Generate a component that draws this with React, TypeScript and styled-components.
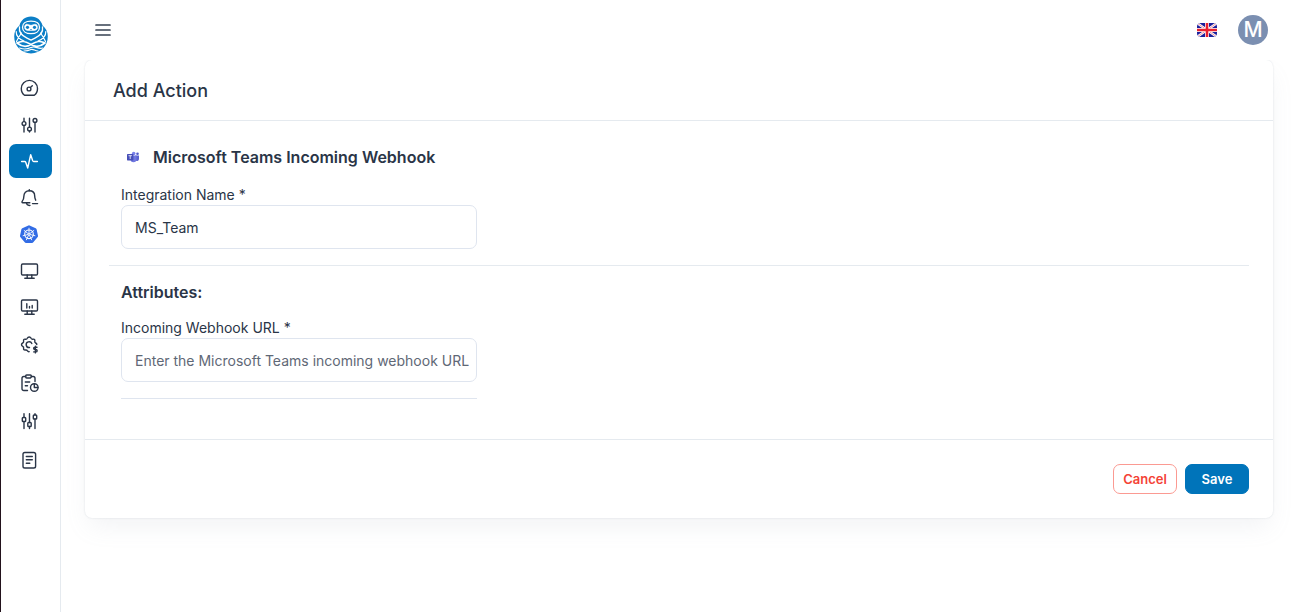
import React, { useState } from "react";
import styled, { createGlobalStyle } from "styled-components";

const ink = "#2a3547";
const blue = "#0074ba";
const line = "#e5eaef";

const GlobalStyle = createGlobalStyle`
  *, *::before, *::after { box-sizing: border-box; }
  body {
    margin: 0;
    background: #fff;
    color: ${ink};
    font-family: Inter, "Liberation Sans", sans-serif;
    font-size: 14px;
  }
  h1, h2, h3 { margin: 0; }
`;

const Shell = styled.div`
  display: flex;
  min-height: 100vh;
  border-left: 1px solid #22121c;
`;

const Sidebar = styled.aside`
  flex: none;
  width: 60px;
  padding: 16px 8px 0;
  border-right: 1px solid ${line};
`;

const Brand = styled.a`
  display: flex;
  justify-content: center;
  height: 38px;
  margin-bottom: 17px;
`;

const NavGroup = styled.nav<{ $height: number }>`
  display: flex;
  flex-direction: column;
  justify-content: space-between;
  height: ${(p) => p.$height}px;
  margin-bottom: 3px;
`;

const NavItem = styled.a<{ $active?: boolean }>`
  display: flex;
  align-items: center;
  height: 34px;
  padding-left: 10px;
  border-radius: 7px;
  color: ${(p) => (p.$active ? "#fff" : ink)};
  background: ${(p) => (p.$active ? blue : "transparent")};
`;

const Main = styled.main`
  flex: 1;
  min-width: 0;
  padding: 0 23px 24px 24px;
`;

const TopBar = styled.header`
  position: relative;
  z-index: 1;
  display: flex;
  align-items: center;
  height: 60px;
  padding: 0 5px 0 8px;
  background: #fff;
`;

const PlainButton = styled.button`
  display: flex;
  padding: 0;
  border: 0;
  background: none;
  cursor: pointer;
`;

const TopActions = styled.div`
  display: flex;
  align-items: center;
  gap: 21px;
  margin-left: auto;
`;

const Avatar = styled.button`
  width: 30px;
  height: 30px;
  padding: 0;
  border: 0;
  border-radius: 50%;
  background: #7b8fb1;
  color: #fff;
  font: 500 21px/30px Inter, sans-serif;
`;

const Card = styled.form`
  border-radius: 7px;
  background: #fff;
  box-shadow: 0 0 2px rgba(145, 158, 171, 0.3), 0 12px 24px -4px rgba(145, 158, 171, 0.12);
`;

const CardHeader = styled.div`
  padding: 19px 28px 17px;
  border-bottom: 1px solid ${line};
`;

const PageTitle = styled.h1`
  font-size: 18px;
  font-weight: 500;
  line-height: 24px;
`;

const CardBody = styled.div`
  padding: 24px 24px 40px;
`;

const Section = styled.section`
  padding: 0 12px 16px;
  & + & {
    padding-top: 16px;
    padding-bottom: 0;
    border-top: 1px solid ${line};
  }
`;

const IntegrationTitle = styled.h2`
  display: flex;
  align-items: center;
  gap: 8px;
  margin-bottom: 16px;
  font-size: 16px;
  font-weight: 600;
  line-height: 24px;
`;

const SectionTitle = styled.h3`
  margin-bottom: 16px;
  font-size: 16px;
  font-weight: 600;
  line-height: 20px;
`;

const Field = styled.div`
  width: 356px;
  max-width: 100%;
`;

const Label = styled.label`
  display: block;
  line-height: 20px;
`;

const Input = styled.input`
  display: block;
  width: 100%;
  height: 44px;
  padding: 0 4px 0 13px;
  border: 1px solid #dfe5ef;
  border-radius: 7px;
  background: #fff;
  color: ${ink};
  font: inherit;
  outline: none;
  &::placeholder { color: #5f6876; opacity: 1; }
  &:focus { border-color: ${blue}; }
`;

const Rule = styled.hr`
  margin: 16px 0 0;
  border: 0;
  border-top: 1px solid #dfe5ef;
`;

const CardFooter = styled.div`
  display: flex;
  justify-content: flex-end;
  gap: 8px;
  padding: 24px;
  border-top: 1px solid ${line};
`;

const Button = styled.button<{ $primary?: boolean }>`
  width: 64px;
  height: 30px;
  padding: 0;
  border: 1px solid ${(p) => (p.$primary ? blue : "#fb9a92")};
  border-radius: 7px;
  background: ${(p) => (p.$primary ? blue : "#fff")};
  color: ${(p) => (p.$primary ? "#fff" : "#f44336")};
  font: 600 13px Inter, sans-serif;
  cursor: pointer;
`;

const Icon = ({ children }: { children: React.ReactNode }) => (
  <svg width="20" height="20" viewBox="0 0 20 20" fill="none" stroke="currentColor" strokeWidth="1.4" strokeLinecap="round" strokeLinejoin="round" aria-hidden="true">
    {children}
  </svg>
);

const Logo = () => (
  <svg width="34" height="38" viewBox="0 0 34 38" fill="none" aria-hidden="true">
    <path d="M17 .6C23 .6 27.300 4.500 28.500 9.500C32 12 33.800 16 33.800 20.500C33.800 30 26.500 37.400 17 37.400S.2 30 .2 20.500C.2 16 2 12 5.500 9.500C6.700 4.500 11 .6 17 .6Z" fill="#0c7fc7" />
    <g stroke="#fff" strokeLinecap="round" strokeLinejoin="round">
      <path d="M17 5.200C11.500 5.200 8.500 7.700 8.500 11.200C8.500 15.200 12 17.700 17 17.700S25.500 15.200 25.500 11.200C25.500 7.700 22.500 5.200 17 5.200Z" strokeWidth="1.300" />
      <path d="M12.800 8.300C15 8.300 15.500 9.300 17 9.300S19 8.300 21.200 8.300C23 8.300 23.500 9.800 23.500 11.200C23.500 13.300 22 14.500 20 14.500H14C12 14.500 10.500 13.300 10.500 11.200C10.500 9.800 11 8.300 12.800 8.300Z" fill="#fff" strokeWidth=".5" />
      <path d="M5.500 11C4.500 17 8.500 20 13 22.200L17 24.200L21 22.200C25.500 20 29.500 17 28.500 11" strokeWidth="1.300" />
      <path d="M2.200 15.500C2 20.500 6 23.500 10 25M31.800 15.500C32 20.500 28 23.500 24 25M7.500 17C5 20.500 3.500 23 2.500 25.500M26.500 17C29 20.500 30.500 23 31.500 25.500" strokeWidth="1.200" />
      <path d="M3 27C8 24 12 25.500 17 28.500S26 31 31 27M3 27C8 31 12 31.500 17 28.500S26 24 31 27" strokeWidth="1.700" />
      <path d="M5.500 32C9.500 33.500 13 33.500 17 31.500S24.500 33.500 28.500 32M10 35C13 35 15 34.500 17 33.500S21 35 24 35" strokeWidth="1.200" />
    </g>
    <circle cx="13.500" cy="11.300" r="1.600" fill="#0c7fc7" />
    <circle cx="20.500" cy="11.300" r="1.600" fill="#0c7fc7" />
    <path d="M16 13h2l-1 1.200Z" fill="#0c7fc7" />
  </svg>
);

const gauge = (
  <Icon>
    <path d="M5.500 17.200C3.500 15.700 2.300 13.200 2.300 10.400C2.300 5.900 6 2.400 10.400 2.400S18.500 5.900 18.500 10.400C18.500 13.200 17.300 15.700 15.300 17.200Z" />
    <circle cx="10" cy="11" r="1.900" />
    <path d="M11.400 9.600L13.300 7.700" />
  </Icon>
);
const sliders = (
  <Icon>
    <path d="M5 3.200V6.500M5 10.500V17M10.500 3.200V12M10.500 16V17M16 7.500V17" />
    <circle cx="5" cy="8.500" r="1.900" />
    <circle cx="10.500" cy="14" r="1.900" />
    <circle cx="16" cy="5.400" r="1.900" />
  </Icon>
);
const squareSliders = (
  <Icon>
    <path d="M5 2.800V6.500M5 10.500V17.500M10.500 2.800V11.500M10.500 15.500V17.500M16 2.800V4M16 8V17.500" />
    <rect x="3.300" y="6.500" width="3.400" height="4" rx=".8" />
    <rect x="8.800" y="11.500" width="3.400" height="4" rx=".8" />
    <rect x="14.300" y="4" width="3.400" height="4" rx=".8" />
  </Icon>
);
const pulse = (
  <Icon>
    <path d="M2.600 10.500H5.700C6.200 10.500 6.500 10.800 6.700 11.300L8.700 17L11.700 3.700L13.700 9.800C13.900 10.300 14.200 10.500 14.700 10.500H18.400" />
  </Icon>
);
const bell = (
  <Icon>
    <path d="M10.800 14.800H3.700C3 14.800 2.700 14 3.200 13.400C4.600 11.700 4.900 10.500 4.900 8C4.900 5 7 2.800 10.300 2.800S15.700 5 15.700 8C15.700 10 16 11 16.700 12.200" />
    <path d="M10.300 1.600V2.800M7.500 15C7.700 16.700 9 17.600 11 17.400M13.500 15.600H18.600" />
  </Icon>
);
const kubernetes = (
  <svg width="20" height="20" viewBox="0 0 20 20" fill="none" aria-hidden="true">
    <path d="M10 1.200L16.700 4.200Q17.400 4.500 17.600 5.200L19 11.700Q19.100 12.400 18.700 13L14.300 18.300Q13.800 18.900 13 18.900H7Q6.200 18.900 5.700 18.300L1.300 13Q.9 12.400 1 11.700L2.400 5.200Q2.600 4.500 3.300 4.200Z" fill="#326ce5" />
    <g stroke="#fff" strokeLinecap="round">
      <circle cx="10" cy="10.300" r="4.300" strokeWidth="1.100" />
      <path d="M10 4.200V9M14.800 6.500L11 9.500M15.900 11.700L11.200 10.600M12.600 15.800L10.600 11.500M7.400 15.800L9.400 11.500M4.100 11.700L8.800 10.600M5.200 6.500L9 9.500" strokeWidth=".9" />
    </g>
    <circle cx="10" cy="10.300" r="1.300" fill="#fff" />
    <circle cx="10" cy="10.300" r=".5" fill="#326ce5" />
  </svg>
);
const monitor = (
  <Icon>
    <rect x="2.500" y="3" width="16" height="11" rx="1.200" />
    <path d="M8.200 14V17.300M12.800 14V17.300M5.800 17.300H15.200" />
  </Icon>
);
const monitorChart = (
  <Icon>
    <rect x="2.500" y="3" width="16" height="11" rx="1.200" />
    <path d="M8.200 14V17.300M12.800 14V17.300M5.800 17.300H15.200M7.800 6.700V11M10.500 9.500V11M13.200 8.500V11" />
  </Icon>
);
const gearDollar = (
  <Icon>
    <path d="M10.200 17.700C9.200 18 8.800 17.500 8.300 16.700C7.900 16 7.200 15.800 6.400 16C5.200 16.300 4.400 15.600 4.600 14.400C4.800 13.500 4.500 12.800 3.700 12.400C2.100 11.600 2.100 9.800 3.700 9C4.500 8.600 4.800 7.900 4.600 7C4.300 5.600 5 4.900 6.400 5.200C7.300 5.400 7.900 5.100 8.300 4.300C9.100 2.500 11.300 2.500 12.100 4.300C12.500 5.100 13.100 5.400 14 5.200C15.400 4.900 16.100 5.600 15.800 7C15.600 7.900 15.900 8.600 16.700 9C17.500 9.400 17.900 9.900 17.800 10.500" />
    <path d="M12.800 9.600A2.900 2.900 0 1 0 10.500 13.500" />
    <path d="M18 13.200H16C14.200 13.200 14.200 15.500 16 15.500H16.800C18.600 15.500 18.600 17.900 16.800 17.900H14.700M16.400 12.200V18.900" />
  </Icon>
);
const clipboardClock = (
  <Icon>
    <path d="M8.500 17.500H4.800C3.700 17.500 3 16.800 3 15.700V5.300C3 4.200 3.700 3.500 4.800 3.500H6.700M12.300 3.500H14.200C15.300 3.500 16 4.200 16 5.300V8.500" />
    <path d="M7.700 2H11.300Q12.400 2 12.400 3.300T11.300 5H7.700Q6.600 5 6.600 3.500T7.700 2ZM6.300 9H10.700M6.300 12.700H8.500" />
    <circle cx="15.300" cy="14.500" r="3.800" />
    <path d="M15.300 11V14.500H18.800" />
  </Icon>
);
const notes = (
  <Icon>
    <rect x="4" y="2.500" width="12.600" height="15.500" rx="1.800" />
    <path d="M7.300 6.500H13.300M7.300 9.800H13.300M7.300 13.200H10.800" />
  </Icon>
);

const Menu = () => (
  <svg width="20" height="20" viewBox="0 0 20 20" stroke="#364152" strokeWidth="1.700" strokeLinecap="round" aria-hidden="true">
    <path d="M3 5H17M3 10H17M3 15H17" />
  </svg>
);

const Flag = () => (
  <svg width="20" height="14" viewBox="0 0 20 14" aria-hidden="true">
    <clipPath id="flag-edge"><rect width="20" height="14" rx="4" /></clipPath>
    <g clipPath="url(#flag-edge)">
      <path fill="#1a1f9c" d="M0 0h20v14H0z" />
      <path d="M0 0L20 14M20 0L0 14" stroke="#fff" strokeWidth="2.400" />
      <path d="M0 0L20 14M20 0L0 14" stroke="#e8313e" strokeWidth=".5" />
      <path d="M10 0V14M0 7H20" stroke="#fff" strokeWidth="4" />
      <path d="M10 0V14M0 7H20" stroke="#e8202f" strokeWidth="2.600" />
    </g>
  </svg>
);

const Teams = () => (
  <svg width="24" height="24" viewBox="0 0 24 24" aria-hidden="true">
    <circle cx="16.500" cy="8.700" r="1.300" fill="#5059c9" />
    <path d="M14.300 10.400H18V14A2.100 2.100 0 0 1 14.300 15.300Z" fill="#5b62d0" />
    <circle cx="12.700" cy="8.500" r="1.800" fill="#7b83eb" />
    <path d="M9.500 10.400H15.500V14.200A3 3 0 0 1 9.500 14.200Z" fill="#7078e0" />
    <rect x="6" y="9" width="6.400" height="6.400" rx=".6" fill="#464eb8" />
    <path d="M7.500 10.700H10.900M9.200 10.700V14" stroke="#fff" strokeWidth=".8" />
  </svg>
);

const monitoring = [
  { name: "Dashboard", icon: gauge },
  { name: "Controls", icon: sliders },
  { name: "Activity", icon: pulse, active: true },
  { name: "Alerts", icon: bell },
  { name: "Kubernetes", icon: kubernetes },
  { name: "Hosts", icon: monitor },
  { name: "Metrics", icon: monitorChart },
];

const management = [
  { name: "Cost settings", icon: gearDollar },
  { name: "Reports", icon: clipboardClock },
  { name: "Configuration", icon: squareSliders },
  { name: "Logs", icon: notes },
];

export default function App() {
  const [name, setName] = useState("MS_Team");
  const [url, setUrl] = useState("");

  return (
    <>
      <GlobalStyle />
      <Shell>
        <Sidebar>
          <Brand href="#" aria-label="Home"><Logo /></Brand>
          <NavGroup $height={253} aria-label="Monitoring">
            {monitoring.map((item) => (
              <NavItem key={item.name} href="#" aria-label={item.name} $active={item.active}>{item.icon}</NavItem>
            ))}
          </NavGroup>
          <NavGroup $height={150} aria-label="Management">
            {management.map((item) => (
              <NavItem key={item.name} href="#" aria-label={item.name}>{item.icon}</NavItem>
            ))}
          </NavGroup>
        </Sidebar>
        <Main>
          <TopBar>
            <PlainButton type="button" aria-label="Toggle menu"><Menu /></PlainButton>
            <TopActions>
              <PlainButton type="button" aria-label="Language"><Flag /></PlainButton>
              <Avatar type="button" aria-label="Account">M</Avatar>
            </TopActions>
          </TopBar>
          <Card onSubmit={(e) => e.preventDefault()}>
            <CardHeader><PageTitle>Add Action</PageTitle></CardHeader>
            <CardBody>
              <Section>
                <IntegrationTitle><Teams />Microsoft Teams Incoming Webhook</IntegrationTitle>
                <Field>
                  <Label htmlFor="integration-name">Integration Name *</Label>
                  <Input id="integration-name" value={name} onChange={(e) => setName(e.target.value)} />
                </Field>
              </Section>
              <Section>
                <SectionTitle>Attributes:</SectionTitle>
                <Field>
                  <Label htmlFor="webhook-url">Incoming Webhook URL *</Label>
                  <Input id="webhook-url" placeholder="Enter the Microsoft Teams incoming webhook URL" value={url} onChange={(e) => setUrl(e.target.value)} />
                  <Rule />
                </Field>
              </Section>
            </CardBody>
            <CardFooter>
              <Button type="button">Cancel</Button>
              <Button type="submit" $primary>Save</Button>
            </CardFooter>
          </Card>
        </Main>
      </Shell>
    </>
  );
}
